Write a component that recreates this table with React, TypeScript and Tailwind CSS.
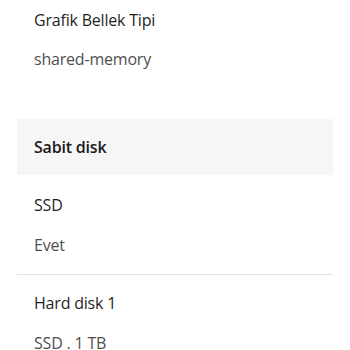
const Item = ({ title, value }: { title: string; value: string }) => (
  <>
    <div className="h-[24px] text-[#1f1f1f]">{title}</div>
    <div className="mt-[16px] h-[24px] text-[#4f4f4f]">{value}</div>
  </>
);

export default function App() {
  return (
    <div className="w-[350px] h-[350px] overflow-hidden bg-white font-['Open_Sans',sans-serif] text-[16px] leading-[24px] tracking-[-0.2px]">
      <div className="px-[34px] pt-[8px]">
        <div className="h-[24px] text-[#1f1f1f]">Grafik Bellek Tipi</div>
        <div className="mt-[15px] h-[24px] text-[#4f4f4f]">shared-memory</div>
      </div>

      {/* section header */}
      <div className="mx-[17px] mt-[48px] h-[56px] bg-[#f6f6f6] px-[17px] flex items-center">
        <span className="font-semibold text-[#1a1a1a]">Sabit disk</span>
      </div>

      <div className="mx-[17px] border-b border-[#e2e2e2] px-[17px] pt-[18px] pb-[17px]">
        <Item title="SSD" value="Evet" />
      </div>
      <div className="mx-[17px] px-[17px] pt-[16px]">
        <Item title="Hard disk 1" value="SSD . 1 TB" />
      </div>
    </div>
  );
}
